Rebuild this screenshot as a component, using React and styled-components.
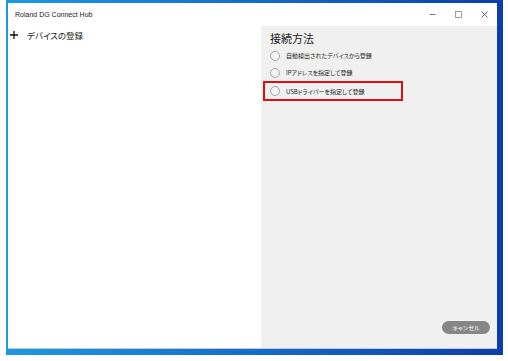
import React from 'react'
import styled, { createGlobalStyle } from 'styled-components'

const GlobalStyle = createGlobalStyle`
  html, body {
    margin: 0;
    padding: 0;
    background: #ffffff;
  }
  body {
    font-family: 'Liberation Sans', 'Noto Sans CJK JP', sans-serif;
    color: #1a1a1a;
  }
`

const jp = `'Noto Sans CJK JP', 'Liberation Sans', sans-serif`

function Radio({ label }) {
  return (
    <Option>
      <Circle />
      <OptionLabel>{label}</OptionLabel>
    </Option>
  )
}

function App() {
  return (
    <>
      <GlobalStyle />
      <Frame>
        <Window>
          <TitleBar>
            <Title>Roland DG Connect Hub</Title>
            <Controls>
              <Control>
                <svg width="7" height="7" viewBox="0 0 7 7">
                  <line x1="0.5" y1="3.5" x2="6.5" y2="3.5" stroke="#555" strokeWidth="0.8" />
                </svg>
              </Control>
              <Control>
                <svg width="7" height="7" viewBox="0 0 7 7">
                  <rect x="0.5" y="0.5" width="6" height="6" fill="none" stroke="#888" strokeWidth="0.8" />
                </svg>
              </Control>
              <Control>
                <svg width="7" height="7" viewBox="0 0 7 7">
                  <path d="M0.5 0.5 L6.5 6.5 M6.5 0.5 L0.5 6.5" stroke="#444" strokeWidth="0.8" />
                </svg>
              </Control>
            </Controls>
          </TitleBar>
          <Body>
            <LeftPane>
              <AddRow>
                <svg width="8" height="8" viewBox="0 0 8 8">
                  <path d="M4 0 V8 M0 4 H8" stroke="#111" strokeWidth="1.3" />
                </svg>
                <AddLabel>デバイスの登録</AddLabel>
              </AddRow>
            </LeftPane>
            <RightPane>
              <Heading>接続方法</Heading>
              <Options>
                <Radio label="自動検出されたデバイスから登録" />
                <Radio label="IPアドレスを指定して登録" />
                <Highlight>
                  <Radio label="USBドライバーを指定して登録" />
                </Highlight>
              </Options>
              <Footer>
                <CancelButton>キャンセル</CancelButton>
              </Footer>
            </RightPane>
          </Body>
        </Window>
      </Frame>
    </>
  )
}

const Frame = styled.div`
  margin-left: 6px;
  width: 497px;
  height: 355px;
  box-sizing: border-box;
  padding: 3px 6px 6px 2px;
  background: linear-gradient(90deg, #1a9be0 0%, #1574d4 40%, #0b3db0 100%);
  display: flex;
`

const Window = styled.div`
  flex: 1;
  background: #ffffff;
  display: flex;
  flex-direction: column;
  border-bottom: 1px solid #c8c8c8;
`

const TitleBar = styled.div`
  height: 23px;
  display: flex;
  align-items: center;
  padding-left: 7px;
`

const Title = styled.div`
  flex: 1;
  font-family: 'Liberation Sans', sans-serif;
  font-size: 7px;
  color: #222;
`

const Controls = styled.div`
  display: flex;
  height: 100%;
`

const Control = styled.div`
  width: 26px;
  display: flex;
  align-items: center;
  justify-content: center;
`

const Body = styled.div`
  flex: 1;
  display: flex;
`

const LeftPane = styled.div`
  width: 253px;
  padding: 4px 0 0 2px;
  box-sizing: border-box;
`

const AddRow = styled.div`
  display: flex;
  align-items: center;
  gap: 9px;
  height: 10px;
`

const AddLabel = styled.span`
  font-family: ${jp};
  font-size: 8.5px;
  font-feature-settings: 'palt';
  color: #1a1a1a;
`

const RightPane = styled.div`
  flex: 1;
  background: #f0f0f0;
  display: flex;
  flex-direction: column;
  padding: 5px 7px 14px 2px;
`

const Heading = styled.div`
  font-family: ${jp};
  font-size: 11px;
  color: #222;
  margin-left: 7px;
  line-height: 14px;
`

const Options = styled.div`
  display: flex;
  flex-direction: column;
  margin-top: 2px;
`

const Option = styled.div`
  display: flex;
  align-items: center;
  height: 17px;
  padding-left: 7px;
  gap: 6px;
`

const Circle = styled.span`
  width: 8px;
  height: 8px;
  border-radius: 50%;
  border: 1px solid #a6a6a6;
  background: #f4f4f4;
  box-sizing: content-box;
`

const OptionLabel = styled.span`
  font-family: ${jp};
  font-size: 6px;
  font-feature-settings: 'palt';
  color: #1a1a1a;
`

const Highlight = styled.div`
  width: 140px;
  height: 20px;
  box-sizing: border-box;
  border: 2px solid #e01010;
  display: flex;
  align-items: center;
  & > div {
    padding-left: 5px;
  }
`

const Footer = styled.div`
  margin-top: auto;
  display: flex;
  justify-content: flex-end;
`

const CancelButton = styled.div`
  width: 48px;
  height: 13px;
  border-radius: 7px;
  background: #868686;
  color: #ffffff;
  font-family: ${jp};
  font-size: 6px;
  font-feature-settings: 'palt';
  display: flex;
  align-items: center;
  justify-content: center;
`

export default App
